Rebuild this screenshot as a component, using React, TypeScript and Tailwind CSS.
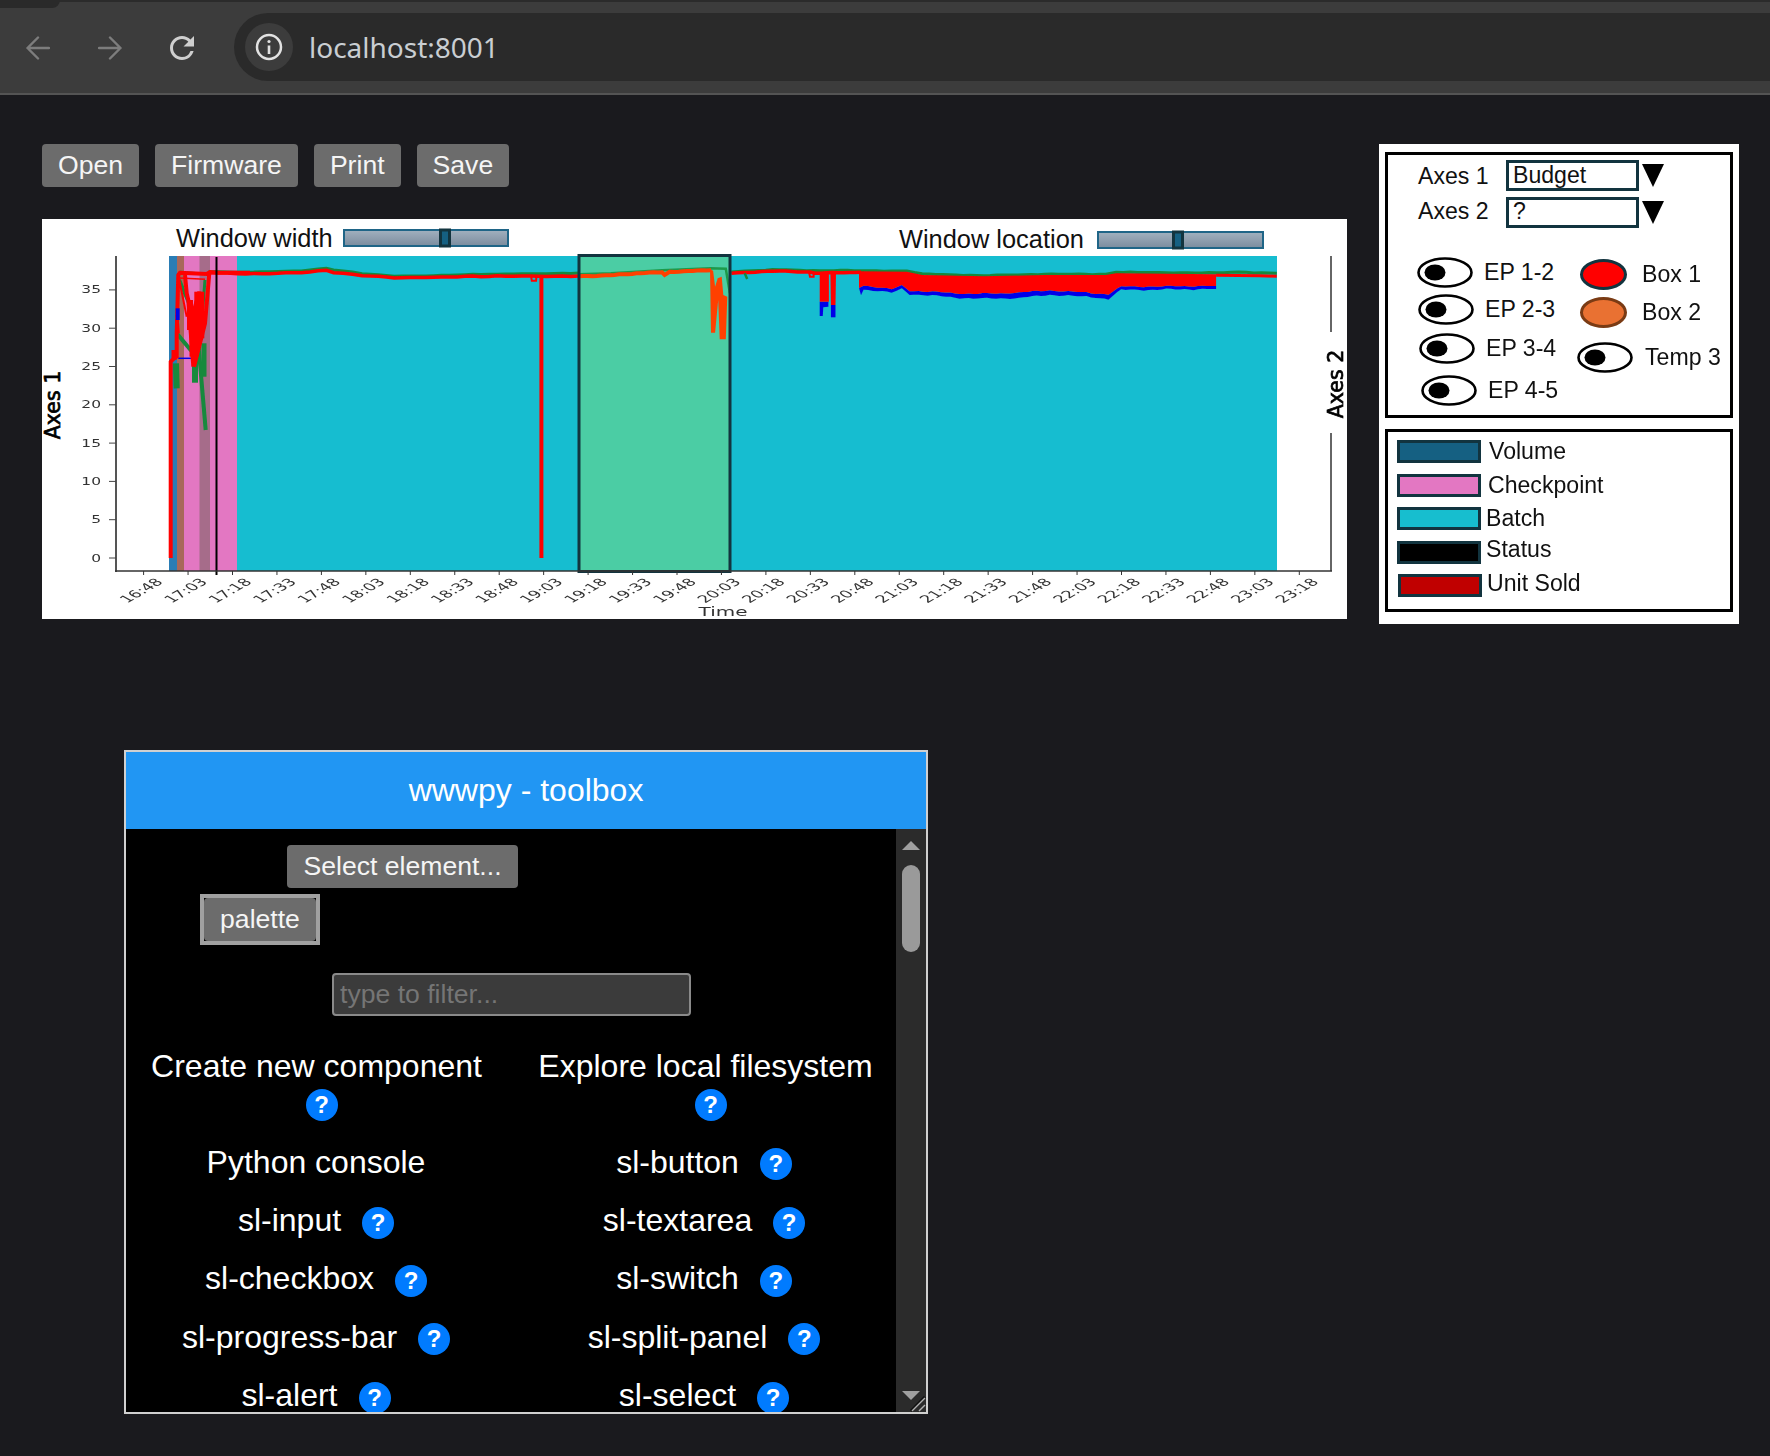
import React from "react";

type Pt = [number, number];
const z2 = (x: number, y: number): Pt => [x / 2.8 + 30, y / 3 + 210];
const z3 = (x: number, y: number): Pt => [x / 1.96 + 560, y / 3 + 210];
const z9 = (x: number, y: number): Pt => [x / 3 + 160, y / 3 + 250];
const path = (map: (x: number, y: number) => Pt, pts: number[][]) =>
  pts.map((p) => map(p[0], p[1]).map((n) => n.toFixed(1)).join(",")).join(" ");

// densify a line and give it the small irregular steps of sampled data
const rough = (pts: number[][], step: number, amp: number) => {
  const out: number[][] = [];
  let k = 0;
  for (let i = 0; i < pts.length - 1; i++) {
    const [x0, y0] = pts[i];
    const [x1, y1] = pts[i + 1];
    const n = Math.max(1, Math.round(Math.abs(x1 - x0) / step));
    for (let j = 0; j < n; j++) {
      const t = j / n;
      k++;
      const noise = Math.round((Math.sin(k * 1.7) + Math.sin(k * 0.61)) * amp);
      out.push([x0 + (x1 - x0) * t, y0 + (y1 - y0) * t + noise]);
    }
  }
  out.push(pts[pts.length - 1]);
  return out;
};

const times: string[] = [];
for (let i = 0; i <= 26; i++) {
  const m = 16 * 60 + 48 + i * 15;
  times.push(`${Math.floor(m / 60)}:${String(m % 60).padStart(2, "0")}`);
}
const yTicks = [0, 5, 10, 15, 20, 25, 30, 35];

const bandTop = [[586, 184], [680, 185], [710, 195], [830, 199], [950, 195], [1070, 195], [1090, 190], [1286, 193]];
const bandMid = [[586, 232], [595, 226], [650, 238], [670, 226], [685, 242], [810, 252], [900, 248], [960, 241], [1050, 250], [1075, 253], [1100, 230], [1286, 228]];
const bandBot = [[590, 254], [595, 238], [650, 248], [670, 237], [685, 252], [810, 266], [900, 264], [960, 254], [1050, 262], [1075, 267], [1100, 240], [1286, 237]];
const midRough = rough(bandMid, 9, 1.2);
const botRough = rough(bandBot, 9, 1.4);

function Slider({ x, y, w, t }: { x: number; y: number; w: number; t: number }) {
  return (
    <g>
      <rect x={x + 1} y={y + 1} width={w - 2} height={16} fill="url(#sliderFill)" stroke="#1f6587" strokeWidth={2} />
      <rect x={t + 1.5} y={y + 1} width={9} height={16} fill="#156082" stroke="#12343f" strokeWidth={3} />
    </g>
  );
}

function Chart() {
  return (
    <svg viewBox="42 219 1305 400" width={1305} height={400} className="block bg-white">
      <defs>
        <linearGradient id="sliderFill" x1="0" y1="0" x2="0" y2="1">
          <stop offset="0" stopColor="#a2b1bf" />
          <stop offset="1" stopColor="#7b8c9e" />
        </linearGradient>
        <filter id="soft" x="-5%" y="-5%" width="110%" height="110%">
          <feGaussianBlur stdDeviation="0.45" />
        </filter>
      </defs>

      <text x={176} y={247} fontFamily="Liberation Sans" fontSize={25.4} fill="#111">Window width</text>
      <Slider x={343} y={229} w={166} t={439} />
      <text x={899} y={248} fontFamily="Liberation Sans" fontSize={25.4} fill="#111">Window location</text>
      <Slider x={1097} y={231} w={167} t={1172} />

      <g filter="url(#soft)">
        <rect x={169} y={256} width={1108} height={315} fill="#18bdd0" />
        <rect x={169} y={256} width={8} height={315} fill="#2a7db5" />
        <rect x={177} y={256} width={60} height={315} fill="#e377c2" />
        <rect x={177} y={256} width={7} height={315} fill="#a8675a" />
        <rect x={199.5} y={256} width={10.5} height={315} fill="#a66c8a" />
        <rect x={579} y={256} width={151} height={315} fill="#4bcda4" />

        <polyline points={path(z3, rough([[336, 185], [430, 179], [510, 182], [590, 182], [680, 183], [710, 192], [830, 197], [950, 193], [1070, 193], [1090, 187], [1286, 189], [1330, 186], [1405, 190]], 14, 0.4))} fill="none" stroke="#138a3c" strokeWidth={3} />
        <polygon points={path(z3, [...midRough, ...[...botRough].reverse()])} fill="#0606e8" />
        <polygon points={path(z3, [...bandTop, ...[...midRough].reverse()])} fill="#ff0000" />
        <polygon points={path(z3, [[509, 275], [526, 275], [526, 290], [516, 292], [515, 318], [509, 318]])} fill="#0606e8" />
        <polygon points={path(z3, [[531, 285], [540, 285], [540, 322], [531, 322]])} fill="#0606e8" />
        <polygon points={path(z3, [[509, 188], [527, 188], [527, 275], [509, 275]])} fill="#ff0000" />
        <polygon points={path(z3, [[530, 188], [541, 188], [540, 285], [531, 285]])} fill="#ff0000" />
        <polyline points={path(z3, rough([[336, 189], [430, 183], [490, 186], [500, 190], [590, 187]], 12, 0.6))} fill="none" stroke="#ff0000" strokeWidth={3.5} />
        <polyline points={path(z3, [[488, 186], [490, 200], [497, 200], [497, 188]])} fill="none" stroke="#ff0000" strokeWidth={2} />
        <polyline points={path(z3, [[1286, 196], [1370, 197], [1405, 199]])} fill="none" stroke="#ff0000" strokeWidth={3} />
        <polyline points={path(z3, [[362, 190], [367, 207]])} fill="none" stroke="#138a3c" strokeWidth={2.5} />

        <polyline points={path(z2, rough([[500, 184], [580, 187], [650, 186], [760, 182], [830, 175], [850, 180], [930, 191], [1020, 198], [1130, 198], [1240, 193], [1400, 192], [1537, 189]], 24, 0.4))} fill="none" stroke="#138a3c" strokeWidth={3} />
        <polyline points={path(z2, rough([[500, 187], [580, 190], [650, 192], [760, 187], [830, 180], [850, 188], [930, 197], [1020, 202], [1130, 203], [1240, 198], [1400, 199], [1537, 198]], 24, 0.8))} fill="none" stroke="#ff0000" strokeWidth={3.5} />
        <polyline points={path(z2, [[1403, 199], [1405, 212], [1417, 212], [1418, 200]])} fill="none" stroke="#ff0000" strokeWidth={2} />
        <line x1={541.4} y1={558} x2={541.4} y2={275} stroke="#ff0000" strokeWidth={4} />

        <polyline points={path(z3, [[37, 193], [100, 190], [200, 181], [295, 175], [325, 176], [333, 250]])} fill="none" stroke="#1f9a4c" strokeWidth={2.5} />
        <polyline points={path(z3, rough([[37, 198], [90, 197], [150, 190], [200, 187], [205, 195], [215, 185], [296, 181]], 9, 0.7))} fill="none" stroke="#ff3f05" strokeWidth={4} />
        <polygon points={path(z3, [[294, 178], [300, 182], [304, 230], [309, 205], [317, 200], [320, 255], [328, 260], [325, 388], [313, 388], [310, 270], [304, 368], [296, 368]])} fill="#ff3f05" />

        <polyline points={path(z9, [[48, 340], [50, 415]])} fill="none" stroke="#138a3c" strokeWidth={6} />
        <polyline points={path(z9, [[58, 90], [95, 180], [105, 320]])} fill="none" stroke="#138a3c" strokeWidth={3.5} />
        <polyline points={path(z9, [[105, 320], [105, 398]])} fill="none" stroke="#138a3c" strokeWidth={6} />
        <polyline points={path(z9, [[50, 250], [100, 310]])} fill="none" stroke="#138a3c" strokeWidth={4} />
        <polyline points={path(z9, [[115, 280], [137, 540]])} fill="none" stroke="#138a3c" strokeWidth={4} />
        <polyline points={path(z9, [[132, 280], [132, 380]])} fill="none" stroke="#138a3c" strokeWidth={5} />
        <polyline points={path(z9, [[135, 90], [118, 300]])} fill="none" stroke="#138a3c" strokeWidth={3} />
        <polyline points={path(z9, [[60, 66], [135, 72], [148, 68]])} fill="none" stroke="#138a3c" strokeWidth={2.5} />
        <polyline points={path(z9, [[55, 325], [95, 325]])} fill="none" stroke="#0606e8" strokeWidth={1.5} />
        <polyline points={path(z9, [[32, 924], [32, 335], [42, 325], [50, 320], [50, 250], [55, 75], [60, 68], [140, 72], [150, 66], [180, 68], [270, 68]])} fill="none" stroke="#ff0000" strokeWidth={4} />
        <polyline points={path(z9, [[42, 300], [42, 330]])} fill="none" stroke="#ff0000" strokeWidth={5} />
        <polyline points={path(z9, [[58, 84], [135, 88]])} fill="none" stroke="#ff0000" strokeWidth={1.5} />
        <polyline points={path(z9, [[75, 75], [80, 130], [85, 150], [100, 350], [105, 170], [118, 125], [125, 250], [102, 350], [135, 220], [148, 70]])} fill="none" stroke="#ff0000" strokeWidth={4} />
        <polyline points={path(z9, [[55, 75], [80, 200]])} fill="none" stroke="#ff0000" strokeWidth={2} />
        <polyline points={path(z9, [[118, 125], [118, 265]])} fill="none" stroke="#ff0000" strokeWidth={10} />
        <polyline points={path(z9, [[102, 175], [102, 320]])} fill="none" stroke="#ff0000" strokeWidth={9} />
        <polyline points={path(z9, [[90, 150], [90, 240]])} fill="none" stroke="#ff0000" strokeWidth={6} />
        <polyline points={path(z9, [[108, 210], [108, 300]])} fill="none" stroke="#ff0000" strokeWidth={8} />
        <polyline points={path(z9, [[53, 175], [53, 210]])} fill="none" stroke="#0606e8" strokeWidth={4} />
        <polyline points={path(z9, [[55, 250], [52, 210]])} fill="none" stroke="#ff0000" strokeWidth={3} />
      </g>

      <line x1={216.5} y1={257} x2={216.5} y2={575} stroke="#000" strokeWidth={2} />
      <rect x={579} y={255.5} width={151} height={316} fill="none" stroke="#12343f" strokeWidth={3} />

      <line x1={116} y1={256} x2={116} y2={572} stroke="#555" strokeWidth={2} />
      <line x1={115} y1={571} x2={1332} y2={571} stroke="#333" strokeWidth={1.5} />
      <line x1={1331} y1={256} x2={1331} y2={332} stroke="#333" strokeWidth={1.5} />
      <line x1={1331} y1={433} x2={1331} y2={571} stroke="#333" strokeWidth={1.5} />

      <g fontFamily="DejaVu Sans" fontSize={10} fill="#333" filter="url(#soft)">
        {yTicks.map((v) => {
          const y = 558 - v * 7.66;
          return (
            <g key={v}>
              <line x1={109} y1={y} x2={116} y2={y} stroke="#444" strokeWidth={1} />
              <text transform={`translate(101,${y + 3.5}) scale(1.55,1)`} textAnchor="end">{v}</text>
            </g>
          );
        })}
        {times.map((t, i) => {
          const x = 143.6 + 44.45 * i;
          return (
            <g key={t}>
              <line x1={x} y1={571} x2={x} y2={575} stroke="#333" strokeWidth={1} />
              <text transform={`translate(${x - 2.5},590.5) scale(1.75,1) rotate(-45)`} textAnchor="middle" dy="0.35em" fontSize={10.3}>{t}</text>
            </g>
          );
        })}
        <text transform="translate(723,616) scale(1.6,1)" textAnchor="middle" fontSize={12.5}>Time</text>
      </g>

      <text transform="translate(60,405) rotate(-90)" textAnchor="middle" fontFamily="DejaVu Sans" fontSize={20.5} fill="#000" stroke="#000" strokeWidth={0.7}>Axes 1</text>
      <text transform="translate(1343,384) rotate(-90)" textAnchor="middle" fontFamily="DejaVu Sans" fontSize={20.5} fill="#000" stroke="#000" strokeWidth={0.7}>Axes 2</text>
    </svg>
  );
}

function Eye() {
  return (
    <svg width={56} height={31} viewBox="0 0 56 31" className="block shrink-0">
      <ellipse cx={28} cy={15.5} rx={26.5} ry={14} fill="#fff" stroke="#000" strokeWidth={2.6} />
      <ellipse cx={18} cy={15.5} rx={10.5} ry={8} fill="#000" />
    </svg>
  );
}

function Tri() {
  return (
    <svg width={22} height={23} viewBox="0 0 22 23" className="block ml-[3px] shrink-0">
      <polygon points="0,0 22,0 11,23" fill="#000" />
    </svg>
  );
}

function EyeRow({ label, className }: { label: string; className: string }) {
  return (
    <div className={`flex items-center gap-[11px] h-[31px] ${className}`}>
      <Eye />
      <span>{label}</span>
    </div>
  );
}

function Swatch({ label, fill, className, labelClass }: { label: string; fill: string; className: string; labelClass: string }) {
  return (
    <div className={`flex items-center h-[23px] ${className}`}>
      <div className={`w-[84px] h-[23px] border-[3px] border-[#12343f] shrink-0 ${fill}`} />
      <span className={labelClass}>{label}</span>
    </div>
  );
}

function SidePanel() {
  return (
    <div className="w-[360px] h-[480px] bg-white pt-[8px] px-[6px] text-[23.1px] leading-[27px] text-[#111]">
      <div className="h-[266px] border-[3px] border-black">
        <div className="flex items-center pl-[30px] mt-[5px]">
          <span className="w-[88px] pt-[1px]">Axes 1</span>
          <div className="w-[133px] h-[31px] border-[3px] border-[#12343f] pl-[4px] leading-[24px]">Budget</div>
          <Tri />
        </div>
        <div className="flex items-center pl-[30px] mt-[6px]">
          <span className="w-[88px] pb-[3px]">Axes 2</span>
          <div className="w-[133px] h-[31px] border-[3px] border-[#12343f] pl-[4px] leading-[23px]">?</div>
          <Tri />
        </div>
        <div className="flex mt-[29px]">
          <div className="w-[189px] shrink-0 flex flex-col">
            <EyeRow label="EP 1-2" className="ml-[29px]" />
            <EyeRow label="EP 2-3" className="ml-[30px] mt-[6px]" />
            <EyeRow label="EP 3-4" className="ml-[31px] mt-[8px]" />
            <EyeRow label="EP 4-5" className="ml-[33px] mt-[11px]" />
          </div>
          <div className="flex flex-col mt-[2px]">
            <div className="flex items-center h-[31px] ml-[3px]">
              <div className="w-[47px] h-[31px] rounded-[50%] bg-[#ff0000] border-[3px] border-[#12343f]" />
              <span className="ml-[15px]">Box 1</span>
            </div>
            <div className="flex items-center h-[31px] ml-[3px] mt-[7px]">
              <div className="w-[47px] h-[31px] rounded-[50%] bg-[#e97132] border-[3px] border-[#7a3b14]" />
              <span className="ml-[15px]">Box 2</span>
            </div>
            <EyeRow label="Temp 3" className="mt-[14px] gap-[12px]" />
          </div>
        </div>
      </div>
      <div className="h-[183px] mt-[11px] border-[3px] border-black pt-[8px] flex flex-col gap-[10.5px]">
        <Swatch label="Volume" fill="bg-[#156082]" className="ml-[9px]" labelClass="ml-[8px]" />
        <Swatch label="Checkpoint" fill="bg-[#e377c2]" className="ml-[9px]" labelClass="ml-[7px]" />
        <Swatch label="Batch" fill="bg-[#17becf]" className="ml-[9px]" labelClass="ml-[5px]" />
        <Swatch label="Status" fill="bg-black" className="ml-[9px]" labelClass="ml-[5px] pb-[5px]" />
        <Swatch label="Unit Sold" fill="bg-[#c00000]" className="ml-[10px]" labelClass="ml-[5px] pb-[4px]" />
      </div>
    </div>
  );
}

function Help({ className = "" }: { className?: string }) {
  return (
    <span className={`w-[32px] h-[32px] rounded-full bg-[#007bff] text-white font-bold text-[24px] leading-[32px] text-center shrink-0 block ${className}`}>?</span>
  );
}

function Item({ label, help = true }: { label: string; help?: boolean }) {
  return (
    <div className="h-[58.4px] flex items-center justify-center gap-[21px]">
      <span className="pb-[4px]">{label}</span>
      {help && <Help />}
    </div>
  );
}

function Toolbox() {
  const rows: [string, boolean][] = [
    ["Python console", false],
    ["sl-button", true],
    ["sl-input", true],
    ["sl-textarea", true],
    ["sl-checkbox", true],
    ["sl-switch", true],
    ["sl-progress-bar", true],
    ["sl-split-panel", true],
    ["sl-alert", true],
    ["sl-select", true],
  ];
  return (
    <div className="w-[804px] h-[664px] ml-[124px] mt-[126px] border-2 border-[#d0d0d0] flex flex-col relative">
      <div className="h-[77px] shrink-0 bg-[#2196f3] text-white text-[32px] pb-[2px] flex items-center justify-center">wwwpy - toolbox</div>
      <div className="flex-1 flex min-h-0 bg-black">
        <div className="w-[770px] shrink-0 overflow-hidden text-white">
          <button className="block h-[43px] w-[231px] ml-[161px] mt-[16px] bg-[#6c6c6c] rounded-[4px] text-[26.6px] text-[#f5f5f5]">Select element...</button>
          <div className="w-[120px] h-[51px] ml-[74px] mt-[6px] border-4 border-[#a0a0a0]">
            <button className="block w-full h-full bg-[#6c6c6c] rounded-[4px] text-[26.6px] text-[#f5f5f5]">palette</button>
          </div>
          <input
            readOnly
            placeholder="type to filter..."
            className="block w-[359px] h-[43px] ml-[206px] mt-[28px] bg-[#3b3b3b] border-2 border-[#8a8a8a] rounded-[4px] px-[6px] text-[26.6px] placeholder:text-[#757575] outline-none"
          />
          <div className="grid grid-cols-[380px_380px] gap-x-[8px] mt-[32px] text-[32px] leading-[37px]">
            <div className="h-[87px] flex flex-col items-center pl-[1px]">
              <span>Create new component</span>
              <Help className="mt-[4px] ml-[10px]" />
            </div>
            <div className="h-[87px] flex flex-col items-center pl-[3px]">
              <span>Explore local filesystem</span>
              <Help className="mt-[4px] ml-[10px]" />
            </div>
            {rows.map(([l, h]) => (
              <Item key={l} label={l} help={h} />
            ))}
          </div>
        </div>
        <div className="w-[30px] shrink-0 bg-[#2b2b2b] flex flex-col items-center pt-[12px] pb-[12px]">
          <svg width={18} height={9} viewBox="0 0 18 9" className="block shrink-0">
            <polygon points="9,0 18,9 0,9" fill="#a0a0a0" />
          </svg>
          <div className="w-[18px] h-[87px] mt-[15px] rounded-full bg-[#9a9a9a]" />
          <svg width={18} height={9} viewBox="0 0 18 9" className="block shrink-0 mt-auto">
            <polygon points="0,0 18,0 9,9" fill="#a0a0a0" />
          </svg>
        </div>
      </div>
      <svg width={16} height={16} viewBox="0 0 16 16" className="absolute right-0 bottom-0">
        <line x1={1} y1={15} x2={15} y2={1} stroke="#111" strokeWidth={3} />
        <line x1={2} y1={15} x2={15} y2={2} stroke="#b0b0b0" strokeWidth={1.5} />
        <line x1={9} y1={15} x2={15} y2={9} stroke="#b0b0b0" strokeWidth={1.5} />
      </svg>
    </div>
  );
}

function BrowserBar() {
  return (
    <div className="h-[95px] shrink-0 flex flex-col bg-[#3c3c3c] relative">
      <div className="h-[2px] bg-[#2b2b2b]" />
      <div className="absolute left-0 top-0 w-[60px] h-[8px] bg-[#2a2a2a] rounded-br-[10px]" />
      <div className="flex-1 flex items-center relative">
        <svg width={24} height={24} viewBox="0 0 24 24" className="ml-[26px] block" fill="none" stroke="#7d7d7d" strokeWidth={2.4} strokeLinecap="round" strokeLinejoin="round">
          <path d="M23 12H1.5M12 1.5 1.5 12 12 22.5" />
        </svg>
        <svg width={24} height={24} viewBox="0 0 24 24" className="ml-[48px] block" fill="none" stroke="#7d7d7d" strokeWidth={2.4} strokeLinecap="round" strokeLinejoin="round">
          <path d="M1 12h21.5M12 1.5 22.5 12 12 22.5" />
        </svg>
        <svg width={36} height={36} viewBox="0 0 24 24" className="ml-[42px] block" fill="#cfcfcf">
          <path d="M17.65 6.35A7.958 7.958 0 0 0 12 4c-4.42 0-7.99 3.58-7.99 8s3.57 8 7.99 8c3.73 0 6.84-2.55 7.73-6h-2.08A5.99 5.99 0 0 1 12 18c-3.31 0-6-2.69-6-6s2.69-6 6-6c1.66 0 3.14.69 4.22 1.78L13 11h7V4l-2.35 2.35z" />
        </svg>
        <div className="ml-[34px] flex-1 h-[68px] mb-[2px] rounded-l-[34px] bg-[#2a2a2a] flex items-center pl-[11px]">
          <div className="w-[48px] h-[48px] rounded-full bg-[#3c3c3c] flex items-center justify-center shrink-0">
            <svg width={28} height={28} viewBox="0 0 28 28" className="block" fill="none" stroke="#e2e2e2">
              <circle cx={14} cy={14} r={12} strokeWidth={2.5} />
              <line x1={14} y1={12.5} x2={14} y2={21} strokeWidth={2.6} />
              <circle cx={14} cy={8.5} r={1.6} fill="#e2e2e2" stroke="none" />
            </svg>
          </div>
          <span className="ml-[16px] pt-[1px] text-[28px] text-[#c9ced2] font-['Noto_Sans',sans-serif]">localhost:8001</span>
        </div>
      </div>
      <div className="h-[2px] bg-[#545454]" />
    </div>
  );
}

export default function App() {
  return (
    <div className="w-[1770px] h-[1456px] bg-[#1a1a1e] flex flex-col overflow-hidden font-['Liberation_Sans',Arial,sans-serif]">
      <BrowserBar />
      <div className="flex items-start mt-[49px]">
        <div className="w-[1305px] ml-[42px] shrink-0">
          <div className="flex gap-[16px]">
            {["Open", "Firmware", "Print", "Save"].map((b) => (
              <button key={b} className="h-[43px] px-[16px] bg-[#6c6c6c] rounded-[4px] text-[26.6px] text-[#f5f5f5]">{b}</button>
            ))}
          </div>
          <div className="mt-[32px]">
            <Chart />
          </div>
        </div>
        <div className="ml-[32px] shrink-0">
          <SidePanel />
        </div>
      </div>
      <Toolbox />
    </div>
  );
}
